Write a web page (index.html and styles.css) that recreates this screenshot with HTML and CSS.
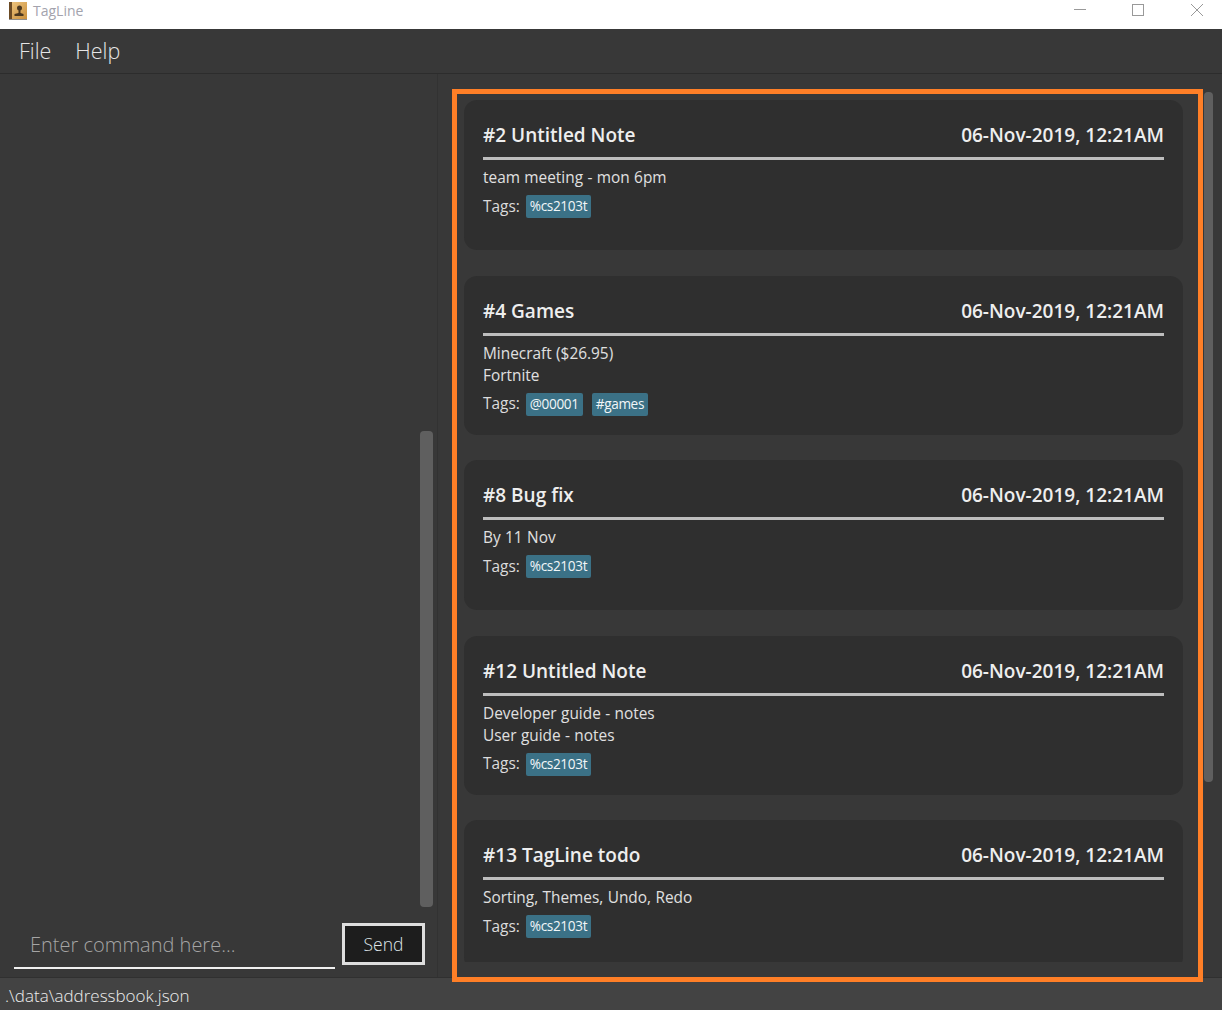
FILE: index.html
```html
<!DOCTYPE html>
<html lang="en">
<head>
<meta charset="utf-8">
<title>TagLine</title>
<link rel="stylesheet" href="styles.css">
</head>
<body>
<div class="app">
  <header class="titlebar">
    <svg class="app-icon" width="18" height="18" viewBox="0 0 18 18" aria-hidden="true">
      <defs>
        <linearGradient id="cover" x1="0" y1="0" x2="1" y2="1">
          <stop offset="0" stop-color="#efc67f"/>
          <stop offset="1" stop-color="#c98f3d"/>
        </linearGradient>
      </defs>
      <rect x="0" y="0" width="18" height="17" fill="url(#cover)"/>
      <rect x="0" y="0" width="3" height="17" fill="#6b4a24"/>
      <circle cx="10.5" cy="6" r="2.5" fill="#4a3720"/>
      <path d="M9.5 8h2v3l3 1v2h-9v-2l4-1z" fill="#4a3720"/>
      <rect x="0" y="17" width="18" height="1" fill="#8d8d8d"/>
    </svg>
    <span class="app-name">TagLine</span>
    <div class="window-controls">
      <svg class="win-btn" width="12" height="12" viewBox="0 0 12 12" aria-hidden="true"><path d="M0 5.5h12" stroke="#999" fill="none"/></svg>
      <svg class="win-btn" width="12" height="12" viewBox="0 0 12 12" aria-hidden="true"><rect x=".5" y=".5" width="11" height="11" stroke="#999" fill="none"/></svg>
      <svg class="win-btn win-close" width="12" height="12" viewBox="0 0 12 12" aria-hidden="true"><path d="M0 0l12 12M12 0L0 12" stroke="#999" fill="none"/></svg>
    </div>
  </header>
  <nav class="menubar">
    <span class="menu-item">File</span>
    <span class="menu-item">Help</span>
  </nav>
  <main class="workspace">
    <section class="left-panel">
      <div class="left-scroll"><div class="thumb left-thumb"></div></div>
      <div class="command-row">
        <div class="command-input">Enter command here...</div>
        <button class="send-btn" type="button">Send</button>
      </div>
    </section>
    <section class="right-panel">
      <div class="note-list">
        <article class="card">
          <div class="card-head"><span>#2 Untitled Note</span><span>06-Nov-2019, 12:21AM</span></div>
          <p class="body-line">team meeting - mon 6pm</p>
          <div class="tags"><span class="tags-label">Tags:</span><span class="tag">%cs2103t</span></div>
        </article>
        <article class="card">
          <div class="card-head"><span>#4 Games</span><span>06-Nov-2019, 12:21AM</span></div>
          <p class="body-line">Minecraft ($26.95)</p>
          <p class="body-line">Fortnite</p>
          <div class="tags"><span class="tags-label">Tags:</span><span class="tag">@00001</span><span class="tag">#games</span></div>
        </article>
        <article class="card">
          <div class="card-head"><span>#8 Bug fix</span><span>06-Nov-2019, 12:21AM</span></div>
          <p class="body-line">By 11 Nov</p>
          <div class="tags"><span class="tags-label">Tags:</span><span class="tag">%cs2103t</span></div>
        </article>
        <article class="card">
          <div class="card-head"><span>#12 Untitled Note</span><span>06-Nov-2019, 12:21AM</span></div>
          <p class="body-line">Developer guide - notes</p>
          <p class="body-line">User guide - notes</p>
          <div class="tags"><span class="tags-label">Tags:</span><span class="tag">%cs2103t</span></div>
        </article>
        <article class="card">
          <div class="card-head"><span>#13 TagLine todo</span><span>06-Nov-2019, 12:21AM</span></div>
          <p class="body-line">Sorting, Themes, Undo, Redo</p>
          <div class="tags"><span class="tags-label">Tags:</span><span class="tag">%cs2103t</span></div>
        </article>
      </div>
      <div class="right-scroll"><div class="thumb right-thumb"></div></div>
    </section>
  </main>
  <footer class="statusbar">.\data\addressbook.json</footer>
  <div class="highlight"></div>
</div>
</body>
</html>
```
FILE: styles.css
```css
* { box-sizing: border-box; }
html, body { margin: 0; padding: 0; }
body { font-family: "Open Sans", "Noto Sans", sans-serif; background: #383838; }
.app { position: relative; width: 1222px; height: 1010px; display: flex; flex-direction: column; overflow: hidden; }

.titlebar { height: 29px; background: #fff; display: flex; align-items: center; padding: 0 19px 0 9px; flex: none; }
.app-icon { margin-bottom: 7px; }
.app-name { margin-left: 6px; margin-bottom: 9px; font-size: 14px; color: #a3a3ad; }
.window-controls { margin-left: auto; margin-bottom: 9px; display: flex; gap: 46px; }
.win-btn { display: block; }
.win-close { margin-left: 1px; }

.menubar { height: 45px; background: #383838; border-bottom: 1px solid #2c2c2c; display: flex; align-items: center; gap: 24px; padding: 0 0 2px 19px; flex: none; }
.menu-item { font-size: 21.5px; font-weight: 300; color: #e6e6e6; }

.workspace { flex: 1; display: flex; min-height: 0; }
.left-panel { width: 438px; border-right: 1px solid #323232; display: flex; flex-direction: column; flex: none; }
.left-scroll { flex: 1; display: flex; justify-content: flex-end; padding: 357px 4px 0 0; min-height: 0; }
.thumb { background: #5f5f5f; border-radius: 4px; }
.left-thumb { width: 13px; height: 476px; }

.command-row { display: flex; align-items: flex-start; gap: 7px; padding: 16px 12px 8px 14px; height: 70px; flex: none; }
.command-input { width: 321px; height: 46px; border-bottom: 2px solid #f0f0f0; padding: 6px 0 0 16px; font-size: 20px; line-height: 32px; font-weight: 300; color: #a5a5a5; }
.send-btn { width: 83px; height: 42px; background: #1d1d1d; border: 3px solid #dedede; color: #dfe6ea; font-family: inherit; font-size: 17.5px; font-weight: 300; padding: 0; }

.right-panel { flex: 1; display: flex; min-width: 0; padding: 26px 9px 15px 26px; }
.note-list { width: 719px; display: flex; flex-direction: column; gap: 25.5px; overflow: hidden; flex: none; }
.card { flex: none; min-height: 150px; background: #2f2f2f; border-radius: 13px; padding: 18px 19px 19px; color: #e0e0e0; }
.card-head { display: flex; justify-content: space-between; height: 42px; border-bottom: 3px solid #bdbdbd; font-size: 19px; line-height: 34px; font-weight: 600; color: #eeeeee; }
.body-line { margin: 0; font-size: 15.4px; line-height: 22px; color: #e0e0e0; word-spacing: 0.4px; }
.card-head + .body-line { margin-top: 7px; }
.tags { display: flex; align-items: center; margin-top: 6px; height: 23px; font-size: 15.4px; }
.tags-label { margin-right: 6px; padding-bottom: 1px; color: #dcdcdc; }
.tag { background: #3b7186; border-radius: 2px; color: #f2f6f8; height: 23px; line-height: 21px; padding: 0 4px; margin-right: 9px; font-size: 13.6px; letter-spacing: -0.35px; }

.right-scroll { flex: none; margin-left: 21px; width: 9px; margin-top: -8px; }
.right-thumb { width: 9px; height: 690px; }

.statusbar { height: 33px; flex: none; background: #434343; border-top: 1px solid #303030; padding: 0 0 0 5px; font-size: 17px; line-height: 35px; font-weight: 300; color: #ededed; }

.highlight { position: absolute; left: 452px; top: 89px; width: 751px; height: 893px; border: 5px solid #ff7f27; pointer-events: none; }
```
